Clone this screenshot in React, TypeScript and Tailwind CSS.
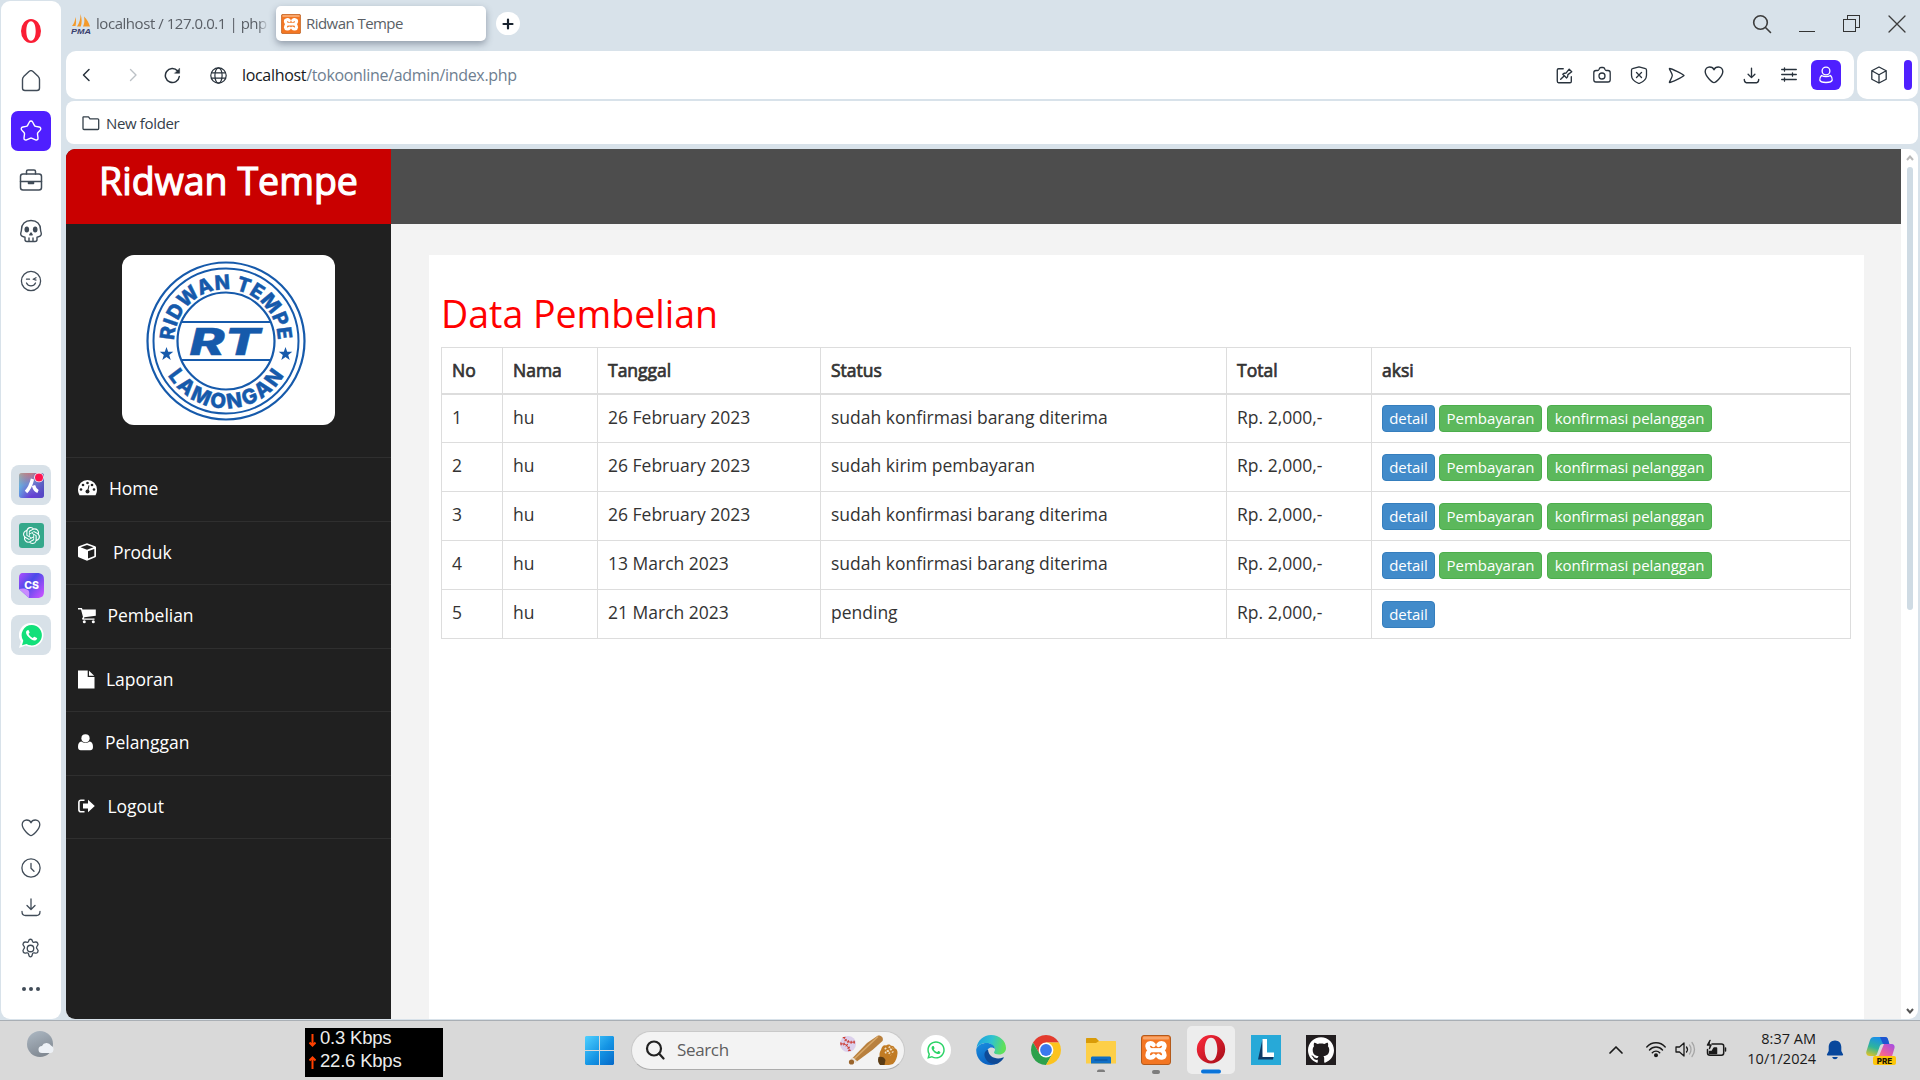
import React from "react";
import { FaWhatsapp } from "react-icons/fa";
import { SiOpenai, SiGithub } from "react-icons/si";

type IconProps = {
  children: React.ReactNode;
  size?: number;
  box?: string;
  sw?: number;
  className?: string;
};

function Icon({ children, size = 20, box = "0 0 20 20", sw = 1.3, className = "" }: IconProps) {
  return (
    <svg
      width={size}
      height={size}
      viewBox={box}
      fill="none"
      stroke="currentColor"
      strokeWidth={sw}
      strokeLinecap="round"
      strokeLinejoin="round"
      className={"shrink-0 " + className}
    >
      {children}
    </svg>
  );
}

const heart = (
  <path d="M10 17.6C8.6 17.6 1.2 11.6 1.2 6.6 1.2 4 3.2 2 5.6 2 7.6 2 9.4 3.2 10 4.8 10.6 3.2 12.4 2 14.4 2 16.8 2 18.8 4 18.8 6.6 18.8 11.6 11.4 17.6 10 17.6Z" />
);

function Xampp({ size }: { size: number }) {
  return (
    <svg width={size} height={size} viewBox="0 0 30 30" className="shrink-0">
      <rect x="0.5" y="0.5" width="29" height="29" rx="2.5" fill="#f37623" stroke="#b35a1c" />
      <rect x="2" y="1.5" width="26" height="3" rx="1" fill="#f9b27c" opacity="0.8" />
      <g stroke="#fff" strokeWidth="4.6" strokeLinecap="round" strokeLinejoin="round" fill="none">
        <path d="M12.500 9.800C10.500 7.600 6.500 8 6.600 11.200c0 1.600 1.200 2.600 2.400 4-1.400 1.600-2.600 2.800-2.400 4.800.3 3 4.400 3.200 6.200 1" />
        <path d="M17.500 9.800c2-2.200 6-1.800 5.900 1.400 0 1.600-1.200 2.600-2.400 4 1.400 1.600 2.600 2.800 2.400 4.800-.3 3-4.400 3.200-6.200 1" />
      </g>
      <path d="M10 15.200h10" stroke="#fff" strokeWidth="4.200" />
    </svg>
  );
}

function OperaSmall() {
  return (
    <svg width="22" height="26" viewBox="0 0 22 26" className="shrink-0">
      <path
        fillRule="evenodd"
        fill="#fa1e35"
        d="M11 1a10 12 0 1 0 0 24a10 12 0 1 0 0-24zM11 3.200c3 0 4.700 4.400 4.700 9.800s-1.700 9.800-4.700 9.800s-4.700-4.400-4.700-9.800s1.700-9.800 4.700-9.800z"
      />
    </svg>
  );
}

function BrowserSidebar() {
  return (
    <aside className="ml-px mt-px flex h-[1018px] w-[60px] shrink-0 flex-col items-center rounded-[9px] bg-white text-[#414c58]">
      <div className="flex h-[60px] w-full items-center justify-center">
        <OperaSmall />
      </div>
      <div className="flex h-10 items-center">
        <Icon size={22} box="0 0 22 22" sw={1.4}>
          <path d="M2.500 9.500c0-1.200.4-2 1.200-2.900L9 1.500c1.200-1.100 2.800-1.100 4 0l5.300 5.100c.8.900 1.200 1.700 1.200 2.900v8.500c0 1.600-.9 2.500-2.500 2.500H5c-1.600 0-2.500-.9-2.500-2.500z" />
        </Icon>
      </div>
      <div className="mt-[10px] flex h-10 w-10 items-center justify-center rounded-[7px] bg-[#4f1fff] text-white">
        <Icon size={22} box="0 0 22 22" sw={1.4}>
          <path d="M9.400 2c.7-1.300 2.500-1.300 3.200 0l1.800 3.400c.3.600.8.900 1.400 1l3.300.6c1.700.3 2.200 1.900 1.100 3.100L18 12.500c-.4.500-.6 1-.5 1.600l.5 3.900c.2 1.600-1 2.400-2.500 1.800l-3.400-1.500c-.7-.3-1.400-.3-2.100 0l-3.400 1.500c-1.500.6-2.800-.2-2.600-1.800l.5-3.900c.1-.6-.1-1.100-.5-1.600L1.800 10.100C.7 8.900 1.200 7.300 2.900 7l3.300-.6c.6-.1 1.100-.4 1.400-1z" />
        </Icon>
      </div>
      <div className="mt-[9px] flex h-10 items-center">
        <Icon size={24} box="0 0 24 24" sw={1.5}>
          <rect x="1.500" y="6" width="21" height="16" rx="2.500" />
          <path d="M7.500 6V3.500c0-1 .5-1.500 1.500-1.500h6c1 0 1.500.5 1.500 1.500V6M1.500 13.500h21" />
          <path d="M9.500 14h5v1.500h-5z" fill="currentColor" />
        </Icon>
      </div>
      <div className="mt-[11px] flex h-10 items-center">
        <Icon size={24} box="0 0 24 24" sw={1.4}>
          <path d="M12 1.500c-6 0-9.500 3.500-9.500 9 0 2-.8 2.700-.8 4.500 0 2.200 2.300 2.800 4.300 3.200v2.300c0 1.200.8 2 2 2h8c1.200 0 2-.8 2-2v-2.300c2-.4 4.300-1 4.300-3.200 0-1.800-.8-2.500-.8-4.500 0-5.500-3.500-9-9.500-9z" />
          <ellipse cx="7.800" cy="10.500" rx="2.300" ry="2.900" fill="currentColor" stroke="none" />
          <ellipse cx="16.200" cy="10.500" rx="2.300" ry="2.900" fill="currentColor" stroke="none" />
          <path d="M12 14l-1.200 1.800h2.400zM10 19v3M14 19v3" />
        </Icon>
      </div>
      <div className="mt-[10px] flex h-10 items-center">
        <Icon size={22} box="0 0 22 22" sw={1.3}>
          <circle cx="11" cy="11" r="9.600" />
          <path d="M6.500 9.200h3M16 7.700l-2.800 1.500 2.800.9M6.500 13c1 2 2.600 2.900 4.500 2.900s3.500-.9 4.500-2.900" />
        </Icon>
      </div>

      <div className="mt-[164px] flex flex-col gap-[10px]">
        <div className="flex h-10 w-10 items-center justify-center rounded-[8px] bg-[#d8e1e8]">
          <svg width="26" height="26" viewBox="0 0 26 26">
            <defs>
              <linearGradient id="ar" x1="0" y1="0" x2="0.300" y2="1">
                <stop offset="0" stopColor="#ff7a50" />
                <stop offset="0.500" stopColor="#7d8fd0" />
                <stop offset="1" stopColor="#6c35d8" />
              </linearGradient>
              <linearGradient id="ar2" x1="0" y1="0" x2="1" y2="0">
                <stop offset="0" stopColor="#4ed4f0" stopOpacity="0.500" />
                <stop offset="0.500" stopColor="#5560c8" stopOpacity="0.200" />
                <stop offset="1" stopColor="#4a52b8" stopOpacity="0.700" />
              </linearGradient>
            </defs>
            <rect x="1" y="1" width="25" height="25" rx="3" fill="url(#ar)" />
            <rect x="1" y="1" width="25" height="25" rx="3" fill="url(#ar2)" />
            <path d="M8 20c3-3 5-7 6.500-13M15.500 13.500c.8 3 2 5 4.500 6" stroke="#fff" strokeWidth="3.400" fill="none" />
            <circle cx="21" cy="5.500" r="4.800" fill="#fff" />
            <circle cx="21" cy="5.500" r="4" fill="#ff1450" />
          </svg>
        </div>
        <div className="flex h-10 w-10 items-center justify-center rounded-[8px] bg-[#d8e1e8]">
          <div className="flex h-[25px] w-[25px] items-center justify-center rounded-[3px] bg-[#35a88b]">
            <SiOpenai size={17} color="#fff" />
          </div>
        </div>
        <div className="flex h-10 w-10 items-center justify-center rounded-[8px] bg-[#d8e1e8]">
          <svg width="25" height="25" viewBox="0 0 25 25">
            <defs>
              <linearGradient id="cs" x1="0" y1="0" x2="1" y2="0.800">
                <stop offset="0" stopColor="#b04cff" />
                <stop offset="0.450" stopColor="#4a4be8" />
                <stop offset="1" stopColor="#c052ff" />
              </linearGradient>
            </defs>
            <path d="M4 0h14c5 0 7 2 7 7v11c0 5-2 7-7 7H10L0 16V5c0-3 1-5 4-5z" fill="url(#cs)" />
            <path d="M0 16c4-1 7-.5 9 1s1 5 1 8z" fill="#c98bff" />
            <text x="12.500" y="16.300" textAnchor="middle" fontSize="10.500" fontWeight="800" fill="#fff" fontFamily="Inter, sans-serif">
              CS
            </text>
          </svg>
        </div>
        <div className="flex h-10 w-10 items-center justify-center rounded-[8px] bg-[#d8e1e8]">
          <svg width="25" height="25" viewBox="0 0 25 25">
            <path d="M12.500 0a12 12 0 0 1 0 24c-2.200 0-4-.5-5.800-1.400L0 25l1.900-6.500A12 12 0 0 1 12.500 0z" fill="#fff" />
            <path d="M12.800 2a10.200 10.200 0 1 1-5.300 19L3 22.300l1.300-4.600A10.200 10.200 0 0 1 12.800 2z" fill="#12e07a" />
            <path d="M8 7.500c-1.500 1-1.300 3.500 1.300 6.300s5.400 4.200 7.400 3.400c1.500-.7 1.700-1.800 1.200-2.200l-2.400-1.300c-.7-.3-1 1.200-1.900 1.200-1.300-.3-3.700-2.600-4-3.800 0-.7 1.200-1 1-1.800L9.700 7.400c-.4-.7-1.100-.3-1.700.1z" fill="#fff" />
          </svg>
        </div>
      </div>

      <div className="mt-[153px] flex flex-col items-center pr-px">
        <div className="flex h-10 items-center">
          <Icon size={20}>{heart}</Icon>
        </div>
        <div className="flex h-10 items-center">
          <Icon size={20}>
            <circle cx="10" cy="10" r="9.100" />
            <path d="M10 5.500v4.800l3 3" />
          </Icon>
        </div>
        <div className="flex h-10 items-center">
          <Icon size={20}>
            <path d="M10 1v10M6 7.500l4 4 4-4M1 13.500c0 3 .8 4 3.500 4h11c2.700 0 3.500-1 3.500-4" />
          </Icon>
        </div>
        <div className="flex h-[41px] items-center">
          <Icon size={21} box="0 0 22 22" sw={1.4}>
            <circle cx="11" cy="11" r="3.400" />
            <path d="M9 3.200C9.300 1.600 9.900 1.300 11 1.300s1.700.3 2 1.900c.3 1.200 1 1.600 2.200 1.200 1.600-.5 2.500-.3 3.300 1s.7 2-.5 3.100c-.9.900-1 2 0 2.900 1.300 1.300 1.400 2 .6 3.300s-1.800 1.500-3.400 1c-1.200-.4-1.900 0-2.200 1.200-.3 1.700-.9 2.900-2 2.900s-1.700-1.200-2-2.900c-.3-1.200-1-1.600-2.200-1.200-1.600.5-2.500.3-3.300-1s-.7-2 .5-3.300c.9-.9 1-2 0-2.900C2.800 7.400 2.700 6.700 3.500 5.400s1.700-1.500 3.300-1C8 4.800 8.700 4.400 9 3.200z" />
          </Icon>
        </div>
        <div className="flex h-10 items-center gap-[3px]">
          <span className="h-1 w-1 rounded-full bg-[#414c58]" />
          <span className="h-1 w-1 rounded-full bg-[#414c58]" />
          <span className="h-1 w-1 rounded-full bg-[#414c58]" />
        </div>
      </div>
    </aside>
  );
}

function TabStrip() {
  return (
    <div className="flex h-[51px] items-start text-[15px] text-[#5a5f66]">
      <div className="flex h-[47px] w-[210px] items-center pl-[5px]">
        <svg width="20" height="20" viewBox="0 0 20 20" className="shrink-0">
          <path d="M1 12c2-2 3-5 3.500-9 .8 3 .8 6 0 9zM6 12.500C8.500 9 9.500 5 9.500 0c1.500 5 1.500 9 .3 12.500zM12 12.500c1.500-3 1.700-6 1-10 3 3 5 6.500 6 10z" fill="#f39a2b" />
          <text x="0" y="19.500" fontSize="8" fontWeight="800" fontStyle="italic" fontFamily="Liberation Sans, sans-serif" fill="#3a3f6e" textLength="20" lengthAdjust="spacingAndGlyphs">
            PMA
          </text>
        </svg>
        <span className="ml-[5px] w-[176px] whitespace-nowrap tracking-[-0.450px] [mask-image:linear-gradient(to_right,black_92%,transparent_98%)]">
          localhost / 127.0.0.1 | php
        </span>
      </div>
      <div className="mt-[6px] flex h-[35px] w-[210px] items-center rounded-[5px] bg-white pl-[5px] shadow-[0_3px_7px_rgba(60,70,90,0.45)]">
        <Xampp size={20} />
        <span className="ml-[5px] tracking-[-0.550px]">Ridwan Tempe</span>
      </div>
      <div className="ml-[10px] mt-[12px] flex h-[23px] w-6 items-center justify-center rounded-full bg-white text-[#17222e]">
        <Icon size={12} box="0 0 12 12" sw={2.2}>
          <path d="M6 1.500v9M1.500 6h9" />
        </Icon>
      </div>
      <div className="ml-auto flex h-[47px] items-center text-[#3c3c3c]">
        <div className="flex w-[45px] justify-center">
          <Icon size={20} sw={1.6}>
            <circle cx="8.500" cy="8.500" r="6.800" />
            <path d="M13.500 13.500l5 5" />
          </Icon>
        </div>
        <div className="flex w-[45px] justify-center">
          <div className="mt-[15px] h-px w-4 bg-[#333]" />
        </div>
        <div className="flex w-[45px] justify-center">
          <svg width="17" height="17" viewBox="0 0 17 17" fill="none" stroke="#333" shapeRendering="crispEdges">
            <path d="M0.500 4.500h12v12h-12zM4.500 4.500v-4h12v12h-4" />
          </svg>
        </div>
        <div className="flex w-[46px] justify-center">
          <Icon size={18} box="0 0 18 18" sw={1.3}>
            <path d="M1 1l16 16M17 1L1 17" />
          </Icon>
        </div>
      </div>
    </div>
  );
}

const slot = "flex w-[37.5px] justify-center";

function AddressBar() {
  return (
    <div className="flex h-12 gap-[3px] pr-[2px]">
      <div className="flex flex-1 items-center rounded-[10px] bg-white pl-[10px] text-[#28323c]">
        <div className="flex w-5 justify-center">
          <Icon size={14} box="0 0 14 14" sw={1.5}>
            <path d="M10 1.500L4.500 7l5.500 5.500" />
          </Icon>
        </div>
        <div className="ml-[27px] flex w-5 justify-center text-[#bcc1c6]">
          <Icon size={14} box="0 0 14 14" sw={1.4}>
            <path d="M4.500 1.500L10 7l-5.500 5.500" />
          </Icon>
        </div>
        <div className="ml-[19px] flex w-5 justify-center">
          <Icon size={17} box="0 0 17 17" sw={1.5}>
            <path d="M15.300 9.500a7 7 0 1 1-1.700-5.600" />
            <path d="M15.600 1.500v4.800h-4.800z" fill="currentColor" strokeWidth="0.500" />
          </Icon>
        </div>
        <div className="ml-[26px] flex w-5 justify-center">
          <Icon size={17} box="0 0 17 17" sw={1.2}>
            <circle cx="8.500" cy="8.500" r="7.700" />
            <ellipse cx="8.500" cy="8.500" rx="3.600" ry="7.700" />
            <path d="M1.500 5.800h14M1.500 11.200h14" />
          </Icon>
        </div>
        <span className="ml-[14px] text-[16px] tracking-[-0.320px] text-[#6e7e90]">
          <span className="text-[#15181c]">localhost</span>/tokoonline/admin/index.php
        </span>
        <div className="ml-auto flex items-center">
          <div className={slot}>
            <Icon size={17} sw={1.600}>
              <path d="M8.500 2H3C2 2 1.500 2.500 1.500 3.500v13c0 1 .5 2 1.500 2h13.500c1 0 1.500-.5 1.500-1.500v-5.500M5.500 14.500l4-4M8 8.500c1.500-1.500 3-1.500 4-1.500l3.500-4.500 3 3L14 9c0 1.500 0 3-1.500 4z" />
            </Icon>
          </div>
          <div className={slot}>
            <Icon size={18} box="0 0 18 18">
              <path d="M3 4.500h1.500c1 0 1.300-.5 1.600-1.300C6.500 2 7 1.500 8 1.500h2c1 0 1.500.5 1.900 1.700.3.800.6 1.300 1.600 1.300H15c1.500 0 2.200.7 2.200 2.200v7c0 1.500-.7 2.300-2.200 2.300H3c-1.500 0-2.200-.8-2.200-2.300v-7C.8 5.200 1.500 4.500 3 4.500z" />
              <circle cx="9" cy="10" r="3" />
            </Icon>
          </div>
          <div className={slot}>
            <Icon size={18} box="0 0 18 18">
              <path d="M9 .8L2.500 2.700c-.8.200-1 .7-1 1.500v5c0 4 2.800 6.500 7.500 8.300 4.700-1.800 7.500-4.300 7.500-8.300v-5c0-.8-.2-1.300-1-1.500zM6.500 6.500l5 5M11.500 6.500l-5 5" />
            </Icon>
          </div>
          <div className={slot}>
            <Icon size={17} box="0 0 17 17">
              <path d="M1.500 1.500C4 1.800 14 6.500 16 8.500c-2 2-12 6.700-14.500 7-.8 0 2.800-5 2.800-7s-3.600-7-2.800-7z" />
            </Icon>
          </div>
          <div className={slot}>
            <Icon size={20} sw={1.4}>{heart}</Icon>
          </div>
          <div className={slot}>
            <Icon size={17} sw={1.6}>
              <path d="M10 1.500v10.500M6 8.500l4 4 4-4M1.500 14.500c0 3 .5 4 2.500 4h12c2 0 2.500-1 2.500-4" />
            </Icon>
          </div>
          <div className={slot}>
            <Icon size={16} box="0 0 16 16">
              <path d="M.7 2.500h14.600M.7 7.500h14.600M.7 12.500h14.600M3.500.8v3.400M11.500 5.800v3.400M3.500 10.800v3.400" />
            </Icon>
          </div>
          <div className="ml-[3px] mr-[13px] flex h-[30px] w-[30px] items-center justify-center rounded-[6px] bg-[#4f1fff] text-white">
            <Icon size={18} box="0 0 18 18">
              <circle cx="9" cy="5" r="3.900" />
              <path d="M4.500 9.500c-1.500 1.500-2 3-1.700 4.500.4 2 2 2.500 6.200 2.500s5.800-.5 6.200-2.500c.3-1.500-.2-3-1.700-4.500-1.500.9-3 1.200-4.500 1.200s-3-.3-4.500-1.200z" />
            </Icon>
          </div>
        </div>
      </div>
      <div className="flex w-[61px] items-center rounded-[10px] bg-white pl-[13px] text-[#28323c]">
        <Icon size={18} box="0 0 18 18">
          <path d="M9 1l7.200 3.800v8.400L9 17l-7.200-3.800V4.800zM1.800 4.800L9 8.800l7.200-4M9 8.800V17" />
        </Icon>
        <div className="ml-4 h-[30px] w-2 rounded-[4px] bg-[#4f1fff]" />
      </div>
    </div>
  );
}

function BookmarksBar() {
  return (
    <div className="mt-[2px] flex h-[43px] items-center pr-[2px]">
      <div className="flex h-full flex-1 items-center rounded-[8px] bg-white pl-[16px] text-[#35404a]">
        <Icon size={18} box="0 0 18 18" className="mt-px">
          <path d="M1.500 2.800h5l1.500 2h7.700c.6 0 1 .4 1 1v8.700c0 .6-.4 1-1 1H2c-.6 0-1-.4-1-1V3.300z" />
        </Icon>
        <span className="ml-[6px] mt-px text-[15px] tracking-[-0.350px]">New folder</span>
      </div>
    </div>
  );
}

function CompanyLogo() {
  const blue = "#165aab";
  const star = "0,-7 1.700,-2.200 6.800,-2.200 2.700,0.900 4.200,6 0,2.900 -4.200,6 -2.700,0.900 -6.800,-2.200 -1.700,-2.200";
  return (
    <svg width="160" height="160" viewBox="-80 -80 160 160">
      <defs>
        <path id="arc-top" d="M-51.700 6V0A51.700 51.700 0 0 1 51.700 0V6" />
        <path id="arc-bottom" d="M-67.500 0A67.500 67.500 0 0 0 67.500 0" />
      </defs>
      <g fill="none" stroke={blue}>
        <circle r="78.500" strokeWidth="2.200" />
        <circle r="72.500" strokeWidth="2" />
        <circle r="48.500" strokeWidth="2.200" />
        <path d="M-44.500-19h89M-44.500 19h89" strokeWidth="2.200" />
      </g>
      <g fill={blue} stroke={blue} strokeWidth="0.400" fontFamily="Inter, sans-serif" fontWeight="800">
        <text fontSize="20" textAnchor="middle" letterSpacing="0.300">
          <textPath href="#arc-top" startOffset="50%">
            RIDWAN TEMPE
          </textPath>
        </text>
        <text fontSize="20.500" textAnchor="middle" letterSpacing="2.200">
          <textPath href="#arc-bottom" startOffset="50.500%">
            LAMONGAN
          </textPath>
        </text>
        <text x="-1" y="14" fontSize="37" fontWeight="800" fontStyle="italic" textAnchor="middle" textLength="71" lengthAdjust="spacingAndGlyphs">
          RT
        </text>
      </g>
      <polygon points={star} fill={blue} transform="translate(-59.500 13)" />
      <polygon points={star} fill={blue} transform="translate(59.500 13)" />
    </svg>
  );
}

const menu = [
  {
    label: "Home",
    gap: "w-[31px]",
    icon: (
      <svg width="19" height="16" viewBox="0 0 19 16" fill="#fff">
        <path d="M9.500 0A9.500 9.500 0 0 1 19 9.500c0 2-.5 4-1.500 5.700H1.500C.5 13.500 0 11.500 0 9.500A9.500 9.500 0 0 1 9.500 0z" />
        <g fill="#202020">
          <circle cx="3" cy="9.500" r="1.300" />
          <circle cx="5" cy="5" r="1.300" />
          <circle cx="9.500" cy="3" r="1.300" />
          <circle cx="14" cy="5" r="1.300" />
          <circle cx="16" cy="9.500" r="1.300" />
          <circle cx="9.500" cy="11.500" r="2" />
          <path d="M10.500 5.200l1 .3-1.300 5.800-1-.3z" />
        </g>
      </svg>
    ),
  },
  {
    label: "Produk",
    gap: "w-[35px]",
    icon: (
      <svg width="18" height="18" viewBox="0 0 18 18" fill="#fff">
        <path fillRule="evenodd" d="M9 .3l8.200 2.900.8.900v9.400l-.6.800L9 17.800.6 14.300 0 13.500V4.100l.8-.9zM9 2L2.500 4.300 9 6.700l6.500-2.400zM10 8.300v7.300l6.300-2.700V6z" />
      </svg>
    ),
  },
  {
    label: "Pembelian",
    gap: "w-[29.500px]",
    icon: (
      <svg width="18" height="16" viewBox="0 0 18 16" fill="#fff" className="mt-[2px]">
        <path d="M0 0h3.500c.6 0 .8.600 1 1.500H17.800v6.300L6.300 9.200l-.3 1.300h10.500v1.300H5c-.8 0-1.200-.8-.8-1.500L5 9 3 1.400H0z" />
        <circle cx="6.300" cy="13.700" r="1.500" />
        <circle cx="15.300" cy="13.700" r="1.500" />
      </svg>
    ),
  },
  {
    label: "Laporan",
    gap: "w-[28px]",
    icon: (
      <svg width="17" height="19" viewBox="0 0 17 19" fill="#fff" className="mt-px">
        <path d="M0 .5h9.700V7H16.500v11.500H0zM11 .7L16.200 5.800H11z" />
      </svg>
    ),
  },
  {
    label: "Pelanggan",
    gap: "w-[27px]",
    icon: (
      <svg width="15" height="17" viewBox="0 0 15 17" fill="#fff">
        <circle cx="7.500" cy="4.300" r="4.100" />
        <path d="M3.300 7.600C5.500 9.300 9.500 9.300 11.700 7.600 14 7.800 15 10 15 13c0 2.200-1.200 3.300-2.700 3.300H2.700C1.200 16.300 0 15.200 0 13c0-3 1-5.200 3.300-5.400z" />
      </svg>
    ),
  },
  {
    label: "Logout",
    gap: "w-[29.500px]",
    icon: (
      <svg width="17" height="14" viewBox="0 0 17 14" fill="#fff">
        <path d="M6.500 1.200H3C1.700 1.200.9 2 .9 3.200v7.600C.9 12 1.700 12.800 3 12.800h3.500" fill="none" stroke="#fff" strokeWidth="1.600" />
        <path d="M5 4.500h5V.8L16.800 7 10 13.200V9.500H5z" />
      </svg>
    ),
  },
];

const full = "sudah konfirmasi barang diterima";
const rows = [
  { no: 1, date: "26 February 2023", status: full, paid: true },
  { no: 2, date: "26 February 2023", status: "sudah kirim pembayaran", paid: true },
  { no: 3, date: "26 February 2023", status: full, paid: true },
  { no: 4, date: "13 March 2023", status: full, paid: true },
  { no: 5, date: "21 March 2023", status: "pending", paid: false },
];

const cell = "border-b border-r border-[#ddd] pl-[10px] pt-[9.500px] align-top leading-[25px] whitespace-nowrap";
const head = "border-b-2 border-r border-[#ddd] pl-[10px] pt-[9.500px] text-left align-top font-normal leading-[25px] [-webkit-text-stroke:0.7px_#333]";
const button = "flex h-[27px] items-center justify-center rounded-[4px] border text-[15px] text-white whitespace-nowrap tracking-[-0.060px]";
const green = "border-[#4cae4c] bg-[#5cb85c]";

function Page() {
  return (
    <div className="mt-[5px] flex h-[870px] w-[1852px] overflow-hidden rounded-[9px] bg-white">
      <div className="w-[325px] shrink-0 bg-[#202020]">
        <div className="h-[75px] bg-[#c90000] text-center text-[37.500px] leading-[63px] tracking-[0.020px] text-white [-webkit-text-stroke:1.2px_#fff]">
          Ridwan Tempe
        </div>
        <div className="flex h-[234px] border-b border-[#2f2f2f] pl-[56px] pt-[31px]">
          <div className="flex h-[170px] w-[213px] items-center rounded-[12px] bg-white pl-[24px] pt-px">
            <CompanyLogo />
          </div>
        </div>
        {menu.map((m) => (
          <div key={m.label} className="flex h-[63.500px] items-center border-b border-[#2f2f2f] pb-[2px] pl-3 text-[17.500px] tracking-[-0.040px] text-white">
            <span className={m.gap + " shrink-0"}>{m.icon}</span>
            {m.label}
          </div>
        ))}
      </div>
      <div className="flex w-[1510px] flex-col bg-[#f3f3f3]">
        <div className="h-[75px] bg-[#4d4d4d]" />
        <div className="ml-[38px] mt-[31px] flex-1 bg-white pl-3 pt-[38px] mr-[37px]">
          <h2 className="text-[37.500px] leading-[42px] text-[#ff0000]">Data Pembelian</h2>
          <table className="mt-3 w-[1410px] table-fixed border-separate border-spacing-0 border-l border-t border-[#ddd] text-[17.500px] text-[#333]">
            <colgroup>
              <col className="w-[61px]" />
              <col className="w-[95px]" />
              <col className="w-[223px]" />
              <col className="w-[406px]" />
              <col className="w-[145px]" />
              <col className="w-[479px]" />
            </colgroup>
            <thead>
              <tr className="h-[47px]">
                {["No", "Nama", "Tanggal", "Status", "Total", "aksi"].map((h) => (
                  <th key={h} className={head}>{h}</th>
                ))}
              </tr>
            </thead>
            <tbody>
              {rows.map((r) => (
                <tr key={r.no} className={r.no === 1 ? "h-12" : "h-[49px]"}>
                  <td className={cell}>{r.no}</td>
                  <td className={cell}>hu</td>
                  <td className={cell}>{r.date}</td>
                  <td className={cell}>{r.status}</td>
                  <td className={cell}>Rp. 2,000,-</td>
                  <td className={"border-b border-r border-[#ddd] pl-[10px] align-top " + (r.no === 1 ? "pt-[10px]" : "pt-[11px]")}>
                    <div className="flex">
                      <span className={button + " w-[53px] border-[#357ebd] bg-[#428bca]"}>detail</span>
                      {r.paid && <span className={button + " ml-1 w-[103px] " + green}>Pembayaran</span>}
                      {r.paid && <span className={button + " ml-[5px] w-[165px] " + green}>konfirmasi pelanggan</span>}
                    </div>
                  </td>
                </tr>
              ))}
            </tbody>
          </table>
        </div>
      </div>
      <div className="flex w-[17px] flex-col items-center pl-px">
        <svg width="8" height="6" viewBox="0 0 8 6" className="mt-[6px]" fill="none" stroke="#b9b9b9" strokeWidth="2">
          <path d="M1 5l3-3.500L7 5" />
        </svg>
        <div className="mt-[6px] h-[443px] w-[6px] rounded-[3px] bg-[#cfdbe4]" />
        <svg width="8" height="6" viewBox="0 0 8 6" className="mb-[5px] mt-auto" fill="none" stroke="#555" strokeWidth="2">
          <path d="M1 1l3 3.500L7 1" />
        </svg>
      </div>
    </div>
  );
}

const app = "flex h-12 w-12 shrink-0 flex-col items-center justify-center rounded-[5px]";

function Taskbar() {
  return (
    <footer className="flex h-[60px] items-center border-t border-[#a9afb5] bg-[#d9d9d9] pb-px">
      <svg width="30" height="28" viewBox="0 0 30 28" className="mb-3 ml-[26px] shrink-0">
        <defs>
          <linearGradient id="moon" x1="0.300" y1="0" x2="0.700" y2="1">
            <stop offset="0" stopColor="#a9b4bf" />
            <stop offset="1" stopColor="#7e868f" />
          </linearGradient>
        </defs>
        <circle cx="14" cy="14" r="13" fill="url(#moon)" />
        <path d="M16 23a3.500 3.500 0 0 1 0-7 5 5 0 0 1 9-.5 4 4 0 0 1 0 7.500z" fill="#edf1f6" />
      </svg>
      <div className="ml-[249px] mt-1 flex h-[49px] w-[138px] shrink-0 flex-col justify-start bg-black pl-1 font-['Liberation_Sans',sans-serif] text-[18.500px] text-[#ececec]">
        {["0.3 Kbps", "22.6 Kbps"].map((t, i) => (
          <div key={t} className={"flex items-center gap-1 " + (i === 0 ? "h-[21px]" : "h-6")}>
            <svg width="7" height="13" viewBox="0 0 7 13" className="mt-1" fill="none" stroke="#ff4000" strokeWidth="2">
              {i === 0 ? <path d="M3.500 0v11M0.500 8.500l3 3 3-3" /> : <path d="M3.500 13V2M0.500 4.500l3-3 3 3" />}
            </svg>
            <span className="tracking-[-0.200px]">{t}</span>
          </div>
        ))}
      </div>
      <svg width="29" height="29" viewBox="0 0 29 29" className="ml-[142px] shrink-0">
        <defs>
          <linearGradient id="win" x1="0" y1="0" x2="1" y2="1">
            <stop offset="0" stopColor="#4fd0ff" />
            <stop offset="0.550" stopColor="#1494e4" />
            <stop offset="1" stopColor="#0568c8" />
          </linearGradient>
        </defs>
        <path d="M1 0h13v14H0V1zM15 0h13l1 1v13H15zM0 15h14v14H1l-1-1zM15 15h14v13l-1 1H15z" fill="url(#win)" />
      </svg>
      <div className="ml-[17px] flex h-[39px] w-[274px] shrink-0 items-center rounded-full border border-[#c9c9c9] border-b-[#acacac] bg-[#f3f3f3] pl-[13px] pr-[5px]">
        <Icon size={20} sw={2.200} className="text-[#222]">
          <circle cx="9" cy="8.500" r="7" />
          <path d="M14 13.500l4.500 5" />
        </Icon>
        <span className="ml-[12px] text-[17px] tracking-[-0.350px] text-[#5e5e5e]">Search</span>
        <svg width="60" height="30" viewBox="0 0 60 30" className="ml-auto">
          <circle cx="9" cy="9" r="8" fill="#dcd0ec" />
          <path d="M5 2c1 4 5 6 11 5M1.500 9c4.500-1 8.500 2 9 7" stroke="#cc3a30" strokeWidth="1" fill="none" />
          <path d="M5 2c1 4 5 6 11 5M1.500 9c4.500-1 8.500 2 9 7" stroke="#cc3a30" strokeWidth="3" strokeDasharray="1 2" fill="none" />
          <path d="M39 .5c3-.5 6 2 4.500 5.500L34 14.500 16.500 27.500l-4-3.500L28 8z" fill="#b8803e" />
          <path d="M39 1.500L14 25" stroke="#d9a868" strokeWidth="1.500" />
          <path d="M14 22.500l4.500 4-2 1.500-4.500-4z" fill="#e9e2d8" />
          <circle cx="12.500" cy="27" r="2.600" fill="#9a652c" />
          <path d="M41 24c-1-4-.5-7 1-9 .8-4 3-5.500 5-4.500 2-1.500 4-1.300 5 .3 2-.4 3.500.7 3.700 2.500 2 .5 3 2.500 2.800 5-.3 4-1.500 8-4.500 10.700-3 1.300-8 1.500-11 .5z" fill="#c17b24" />
          <path d="M39.500 22c3-1 6 0 7 3l-1 5h-4.500c-2-2-2.500-5-1.500-8z" fill="#5a3b14" />
          <path d="M46 13l6 7M50 11.500l4 6M46 18l8-5" stroke="#f0e0c4" strokeWidth="2" strokeDasharray="1.500 1.500" />
        </svg>
      </div>
      <div className="ml-[7px] flex shrink-0 gap-[7px]">
        <div className={app}>
          <div className="flex h-[30px] w-[30px] items-center justify-center rounded-full bg-white">
            <FaWhatsapp size={20} color="#2bd366" />
          </div>
        </div>
        <div className={app}>
          <svg width="30" height="30" viewBox="0 0 30 30">
            <defs>
              <linearGradient id="edge-a" x1="0" y1="0" x2="1" y2="0.200">
                <stop offset="0" stopColor="#1b9de2" />
                <stop offset="0.550" stopColor="#2fc2d0" />
                <stop offset="1" stopColor="#5fe05a" />
              </linearGradient>
              <linearGradient id="edge-b" x1="0" y1="0" x2="0.500" y2="1">
                <stop offset="0" stopColor="#1a8fe0" />
                <stop offset="1" stopColor="#0a5fc0" />
              </linearGradient>
            </defs>
            <path d="M.5 13C1.500 5.500 7.500 0 15 0c8.500 0 15 6 15 13 0 4-3 6.500-7 6.500-3 0-5-.8-5-2 0-.8 1-1.200 1-3C19 11.500 15 8 10.500 8 6 8 2 10 .5 13z" fill="url(#edge-a)" />
            <path d="M.3 14C2 10 6 8 10.500 8c4.500 0 8 2.500 8.500 6-1-1-2-1.500-3.500-1.500-3.500 0-5 3-4.500 6.500C12 25 18 29 23 27.500 20.500 29 18 30 15 30 6.500 30-.5 23 .3 14z" fill="url(#edge-b)" />
            <path d="M12 14.500c-3.500 1.500-4.500 5-2.500 9 2 4 6.500 6 10.500 5.600 3-.8 6-3 7.700-6 .3-.7-.2-1-.8-.7C21 25 12.500 22.500 12 14.500z" fill="#0e4a97" />
          </svg>
        </div>
        <div className={app}>
          <svg width="30" height="30" viewBox="0 0 30 30">
            <path d="M2.010 7.500A15 15 0 0 1 27.990 7.500H15L8.500 18.750z" fill="#e33b2e" />
            <path d="M2.010 7.500A15 15 0 0 0 15 30l6.500-11.250H8.500z" fill="#2da14c" />
            <path d="M27.990 7.500A15 15 0 0 1 15 30l6.500-11.250L15 7.500z" fill="#fcc31e" />
            <circle cx="15" cy="15" r="7.400" fill="#fff" />
            <circle cx="15" cy="15" r="5.900" fill="#3b79ee" />
          </svg>
        </div>
        <div className={app}>
          <svg width="30" height="44" viewBox="0 -9.500 30 44">
            <path d="M0 0C0-1 .5-1 1-1h9l3 3v4H0z" transform="translate(0 1.500)" fill="#d99b08" />
            <path d="M0 5.500h10l3-2h16.500c.3 0 .5.300.5.700V26H0z" fill="#fdcf48" />
            <path d="M5 20.500c0-1 .7-1.500 1.500-1.500h17c.8 0 1.500.5 1.500 1.500V26H5z" fill="#0f6fc6" />
            <path d="M8.500 22.500h13" stroke="#0a4c92" />
            <rect x="11" y="32" width="8" height="4" rx="2" fill="#7d7d7d" />
          </svg>
        </div>
        <div className={app}>
          <div className="mt-[9px] flex h-[39px] flex-col items-center justify-between">
            <Xampp size={30} />
            <span className="h-1 w-2 rounded-full bg-[#7d7d7d]" />
          </div>
        </div>
        <div className={app + " bg-[#ededed]"}>
          <svg width="30" height="40" viewBox="0 0 30 40" className="mt-[8px]">
            <defs>
              <linearGradient id="op" x1="0" y1="0" x2="1" y2="1">
                <stop offset="0" stopColor="#ff2a3c" />
                <stop offset="1" stopColor="#a30d18" />
              </linearGradient>
            </defs>
            <path
              fillRule="evenodd"
              fill="url(#op)"
              d="M15 1a14.200 14.200 0 1 0 0 28.400a14.200 14.200 0 1 0 0-28.400zM15 3.700c3.900 0 6.300 4.800 6.300 11.500s-2.400 11.500-6.300 11.500s-6.300-4.800-6.300-11.500s2.400-11.500 6.300-11.500z"
            />
            <rect x="5" y="35.500" width="20" height="4" rx="2" fill="#0a74da" />
          </svg>
        </div>
        <div className={app}>
          <svg width="30" height="30" viewBox="0 0 30 30">
            <rect width="30" height="30" fill="#27a9d8" />
            <path d="M11.500 4L7 24.500h15l.5-2.500H12z" fill="#0d3a66" />
            <path d="M11.500 4h4.500v13.500h7V22H11.500z" fill="#fff" />
          </svg>
        </div>
        <div className={app}>
          <div className="flex h-[30px] w-[30px] items-center justify-center bg-[#211d1f]">
            <SiGithub size={26} color="#fff" />
          </div>
        </div>
      </div>
      <div className="ml-auto flex shrink-0 items-center text-[#1a1a1a]">
        <Icon size={16} box="0 0 16 16" sw={1.700}>
          <path d="M2 11l6-6 6 6" />
        </Icon>
        <Icon size={20} sw={1.400} className="mb-[2px] ml-[22px]">
          <path d="M.8 8c5-5.600 13.400-5.600 18.400 0M3.500 11c3.600-4 9.400-4 13 0M6.300 13.800c2-2.300 5.400-2.300 7.400 0" />
          <circle cx="10" cy="16.300" r="1.300" fill="currentColor" />
        </Icon>
        <Icon size={21} box="0 0 21 20" sw={1.300} className="mb-px ml-[9px]">
          <path d="M1 7.500h3.500L9 3.500v13L4.500 12.500H1zM11.500 7.500c1.200 1.500 1.200 3.500 0 5" />
          <path d="M14.500 5.500c2 2.500 2 6.500 0 9M17 3c3.300 4 3.300 10 0 14" stroke="#a5a5a5" />
        </Icon>
        <Icon size={21} box="0 0 21 20" sw={1.500} className="mb-px ml-[10px]">
          <path d="M6 4.500h9.500c1.500 0 2.200.8 2.200 2v7c0 1.300-.7 2.200-2.200 2.200H4c-1.500 0-2.500-.8-2.500-2.200V10" />
          <path d="M3.500 14h7V8.500L8 8.500 6 12H3.500zM19.500 8.500v3M4 1L1.500 5.500H5L3.500 9" fill="currentColor" />
        </Icon>
        <div className="mb-[2px] ml-[19px] w-[70px] whitespace-nowrap text-right text-[14.500px] leading-5 tracking-[0px]">
          <div>8:37 AM</div>
          <div>10/1/2024</div>
        </div>
        <svg width="18" height="20" viewBox="0 0 18 20" className="ml-[10px]" fill="#08479c">
          <path d="M9 .5c3.800 0 6.300 2.800 6.300 6.500v4l1.700 3.300c.3.600 0 1.200-.7 1.200H1.700c-.7 0-1-.6-.7-1.200L2.700 11V7C2.700 3.300 5.200.5 9 .5zM6.200 17h5.600c-.5 1.500-1.500 2.200-2.800 2.200S6.700 18.500 6.200 17z" />
        </svg>
        <svg width="30" height="30" viewBox="0 0 30 30" className="ml-[22px] mr-[24px] mt-[3px]">
          <defs>
            <linearGradient id="cp-a" x1="0.400" y1="0" x2="0" y2="1">
              <stop offset="0" stopColor="#1a8fe8" />
              <stop offset="0.500" stopColor="#2fb59a" />
              <stop offset="1" stopColor="#f5c518" />
            </linearGradient>
            <linearGradient id="cp-b" x1="1" y1="0" x2="0" y2="1">
              <stop offset="0" stopColor="#a04be8" />
              <stop offset="0.600" stopColor="#f0609a" />
              <stop offset="1" stopColor="#ff9a4a" />
            </linearGradient>
          </defs>
          <path d="M8 0h11c2 0 2.500 1 3 2.500l1.300 4.500H17c-2 0-3 1-3.500 3L11 17c-.5 1.500-1.500 2-3 2H4c-3 0-4.500-2-3.500-5L4 3c.7-2 2-3 4-3z" fill="url(#cp-a)" />
          <path d="M14 0h5c2 0 2.500 1 3 2.500l1.300 4.500H17z" fill="#1f55d0" />
          <path d="M18 7h7.500c2.500 0 3.500 2 3 4l-3 10H8.500l3-1.500c1.500-.7 2-1.500 2.500-3z" fill="url(#cp-b)" />
          <rect x="7" y="19" width="23" height="9" rx="2" fill="#fdc60a" />
          <text x="18.500" y="26.500" fontSize="8" fontWeight="800" textAnchor="middle" fontFamily="Inter, sans-serif" fill="#1c1600">
            PRE
          </text>
        </svg>
      </div>
    </footer>
  );
}

export default function App() {
  return (
    <div className="flex h-[1080px] w-[1920px] flex-col overflow-hidden bg-[#d8e2ea] font-['Open_Sans',sans-serif]">
      <div className="flex h-[1020px]">
        <BrowserSidebar />
        <main className="ml-[5px] flex w-[1854px] flex-col">
          <TabStrip />
          <AddressBar />
          <BookmarksBar />
          <Page />
        </main>
      </div>
      <Taskbar />
    </div>
  );
}
